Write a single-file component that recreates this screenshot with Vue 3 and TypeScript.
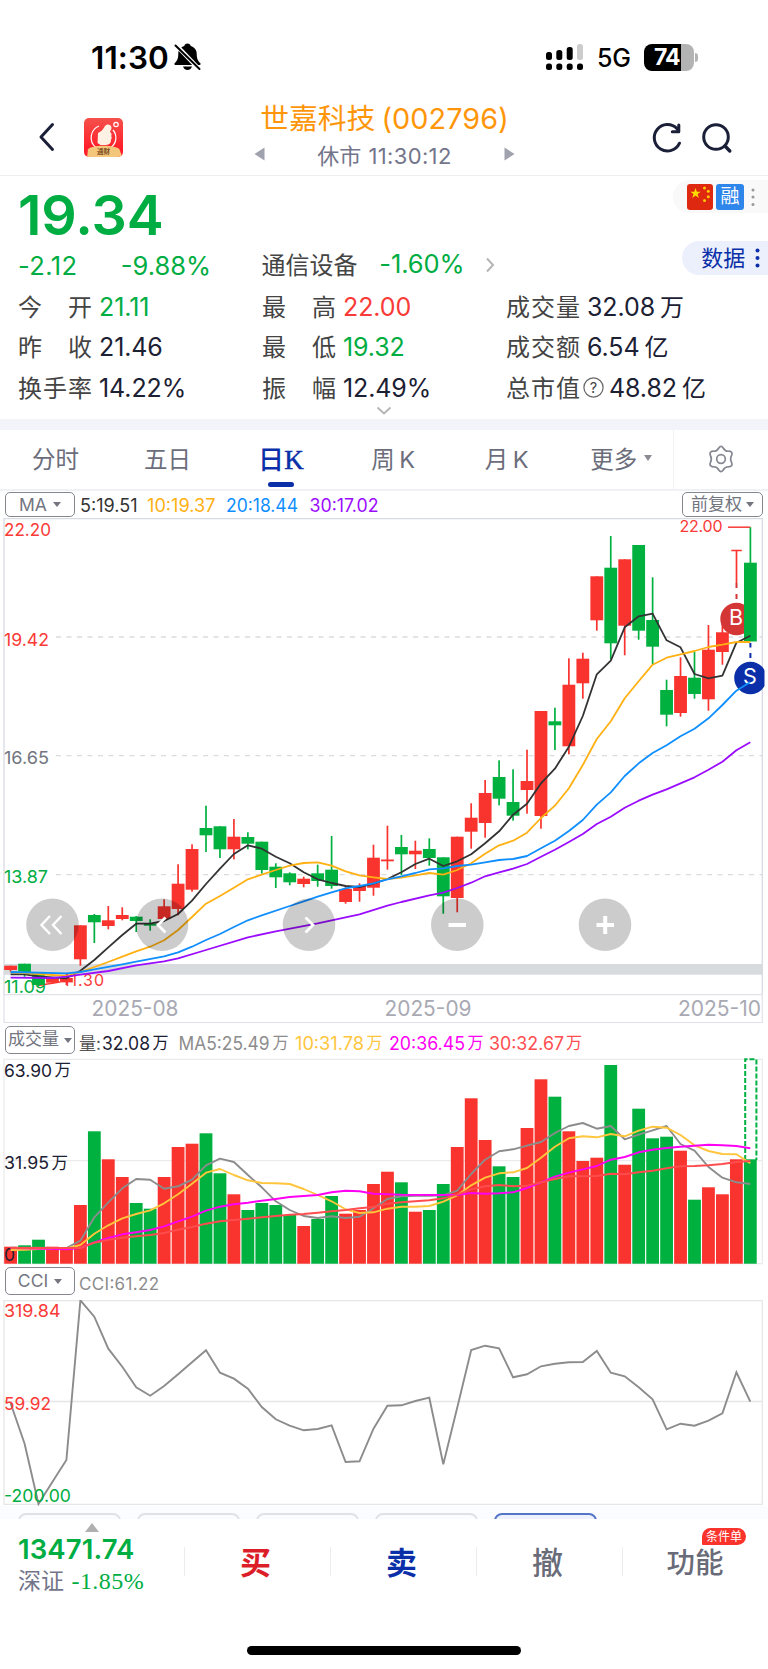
<script setup lang="ts">
type Candle = [color: 'r' | 'g', top: number, bottom: number, high: number, low: number]
type Point = [index: number, y: number]

const STEP = 13.957
const cx = (i: number): number => 10.6 + i * STEP

const candles: Candle[] = [
  ['r', 965.7, 970, 965.7, 972], ['g', 963.7, 972, 963.7, 976.7], ['g', 972.7, 985, 972.7, 986],
  ['r', 978.3, 982.7, 977, 984], ['r', 978, 982.4, 976, 985], ['r', 925.3, 959.3, 925.3, 965.7],
  ['g', 915, 922.3, 914, 943], ['r', 920.3, 926, 906, 929.3], ['r', 915, 919, 907.3, 920.3],
  ['g', 916.7, 921, 916, 932], ['g', 923.5, 925.7, 919.3, 930.7], ['r', 906.3, 919, 899.3, 921.7],
  ['r', 883.7, 909, 864.3, 915.3], ['r', 849, 889.7, 844.3, 891.7], ['g', 828, 835.3, 805.7, 852],
  ['g', 826.3, 849.3, 826.3, 858], ['r', 836.7, 849.3, 819, 859.3], ['g', 837, 843.7, 832.3, 849.3],
  ['g', 841.7, 870, 841.7, 873.7], ['g', 866.7, 877.3, 863.3, 888], ['g', 873.3, 882.3, 872.3, 885.3],
  ['r', 878.7, 884, 876.7, 887.3], ['g', 873.3, 881, 864.7, 886.7], ['g', 869.7, 886, 836, 888.7],
  ['r', 889, 902, 887.3, 903.7], ['r', 886, 891, 883.3, 901.7], ['r', 857.7, 887.7, 844.7, 895.7],
  ['r', 859.5, 861.3, 825.7, 869.7], ['g', 847, 854.3, 835, 875], ['r', 850.7, 854.3, 840.7, 869],
  ['g', 849, 858, 838.3, 865.7], ['g', 857.3, 896.3, 857.3, 913.7], ['r', 836.7, 898, 836.7, 912.3],
  ['r', 817.7, 831.7, 803.3, 848.7], ['r', 793, 823, 780, 837.7], ['g', 777, 798.7, 760.3, 805.3],
  ['g', 802, 815.7, 769.3, 820.7], ['r', 781, 790, 749.7, 813.7], ['r', 711, 816, 711, 828.7],
  ['g', 721.3, 725.3, 707.7, 750], ['r', 684.7, 746.3, 658.3, 754.3], ['r', 658.7, 683.3, 652.7, 698.7],
  ['r', 576.3, 620.3, 576.3, 630.7], ['g', 567.7, 643.3, 536, 659.3], ['r', 559.3, 625.7, 559.3, 655.3],
  ['g', 545, 630.7, 545, 639.7], ['g', 620, 646.7, 577.3, 664], ['g', 690, 714.7, 679.7, 726.3],
  ['r', 676, 713, 657.3, 716.7], ['g', 677.7, 694, 651.7, 698.7], ['r', 649.7, 699.3, 625, 710.7],
  ['r', 632.3, 652, 621.7, 664.7],
]

const path = (pts: Point[]): string => pts.map(([i, y]) => `${cx(i).toFixed(1)},${y}`).join(' ')
const series = (ys: number[]): Point[] => ys.map((y, i): Point => [i, y])
const volY = (v: number): number => Math.round((1020 + v / 3) * 10) / 10
const cciY = (v: number): number => Math.round((1260 + v / 3) * 10) / 10

const priceLines: { color: string; points: string }[] = [
  {
    color: '#333',
    points: path(series([974.3, 974.3, 976.3, 977.3, 978.3, 970.7, 960, 947.3, 935, 923.7, 923.7, 921, 914, 900.7, 884, 868.7, 854, 845.3, 848.7, 856.7, 863.3, 872.3, 879.3, 883, 886, 887, 883.7, 879, 872.3, 864, 858.7, 866, 861.3, 854.3, 843.3, 831.3, 814.7, 803.7, 783.3, 768.7, 746.7, 716, 674.3, 660.7, 627.3, 616.3, 613.7, 640.3, 647.3, 674, 678.3, 675.7, 642.7, 635.7])),
  },
  {
    color: '#ffb012',
    points: path([[0, 972], [4, 976], [5, 972], [6, 967], [7, 962], [8, 956.7], [9, 951.3], [10, 946.7], [11, 940.3], [12, 930], [13, 917], [14, 903.7], [15, 896], [16, 887.7], [17, 879.3], [18, 874.7], [19, 870], [20, 865.7], [21, 863], [22, 862.3], [23, 865.7], [24, 871.3], [25, 875.3], [26, 877.3], [27, 879], [28, 877.7], [29, 875.3], [30, 873], [31, 874.7], [32, 870], [33, 863.3], [34, 853.7], [35, 845.3], [36, 840.7], [37, 832.7], [38, 818], [39, 805.7], [40, 788.3], [41, 765], [42, 739], [43, 721.3], [44, 698.3], [45, 681.3], [46, 664.7], [47, 657.7], [48, 654.3], [49, 651], [50, 647], [51, 644.7], [52, 642], [53, 642]]),
  },
  {
    color: '#0f8eff',
    points: path([[0, 972], [4, 973.3], [5, 972], [6, 969.3], [8, 964.3], [9, 961.7], [11, 956.3], [12, 952.3], [13, 946.7], [14, 940], [15, 934], [16, 927], [17, 920.3], [18, 915.3], [20, 906], [21, 901.3], [22, 896.7], [23, 892.3], [24, 888.3], [25, 886], [26, 883.3], [27, 879.3], [28, 876.3], [29, 873], [30, 869.3], [31, 868.3], [32, 866], [33, 864.7], [34, 862.3], [35, 860], [36, 859], [37, 856], [38, 848.3], [39, 840.7], [40, 831], [41, 820], [42, 804.7], [43, 792.3], [44, 776], [45, 763.3], [46, 753], [47, 745.3], [48, 736.3], [49, 728.7], [50, 718.3], [51, 705], [52, 690.7], [53, 682]]),
  },
  {
    color: '#9b0cff',
    points: path([[0, 977.7], [3, 978], [4, 976.7], [5, 974.7], [7, 971], [9, 965.3], [11, 961.3], [12, 958.3], [14, 950], [17, 937.3], [19, 931.3], [22, 923.3], [25, 914.3], [27, 905.7], [28, 902], [30, 895.3], [31, 892.7], [32, 888], [33, 882.7], [34, 876.3], [35, 872.3], [36, 868.7], [37, 864], [38, 856.7], [39, 849.7], [40, 842], [41, 834], [42, 824], [43, 816.7], [44, 807.7], [45, 800.7], [46, 794.7], [47, 789.3], [48, 783.3], [49, 777.3], [50, 769.7], [51, 761.7], [52, 750.3], [53, 742.3]]),
  },
]

const volumeColors = 'rggrrrgrrggrrrggrggggrggrrrrgrggrrrggrrgrrrgrgggrgrrrg'
const volumes = [680, 676, 659, 680, 683, 555, 334, 418, 471, 549, 566, 471, 381, 371, 340, 460, 523, 570, 549, 555, 585, 618, 597, 528, 581, 570, 492, 455, 487, 575, 570, 492, 381, 235, 360, 439, 471, 324, 178, 230, 334, 423, 413, 135, 434, 266, 355, 350, 392, 539, 502, 523, 418, 418]
  .map((v, i) => ({ up: volumeColors[i] === 'r', y: volY(v) }))

const vol = (pts: Point[]): string => path(pts.map(([i, v]): Point => [i, volY(v)]))
const volumeLines: { color: string; points: string }[] = [
  { color: '#8c8c8c', points: vol(series([683, 683, 683, 684, 684, 662, 592, 547, 505, 477, 479, 506, 499, 479, 436, 416, 426, 465, 502, 544, 570, 588, 594, 589, 594, 590, 565, 537, 529, 527, 527, 526, 512, 462, 419, 394, 388, 377, 366, 339, 318, 309, 326, 318, 358, 344, 331, 318, 372, 392, 441, 473, 487, 492])) },
  { color: '#ffc53d', points: vol(series([690, 689, 687, 686, 685, 675, 641, 616, 595, 582, 571, 550, 523, 491, 458, 447, 465, 481, 489, 490, 492, 507, 525, 544, 568, 579, 577, 566, 560, 560, 558, 545, 526, 496, 473, 460, 457, 444, 413, 380, 355, 349, 352, 342, 349, 332, 320, 323, 345, 376, 393, 402, 403, 430])) },
  { color: '#ff00f5', points: vol([[0, 684], [4, 688], [5, 684], [6, 667], [7, 654], [8, 643], [9, 637], [10, 630], [11, 619], [12, 604], [13, 590], [14, 572], [15, 560], [16, 553], [17, 548], [18, 542], [19, 537], [20, 531], [21, 528], [22, 525], [23, 517], [24, 512], [25, 514], [26, 521], [27, 523], [28, 524], [32, 525], [33, 519], [34, 521], [35, 520], [36, 517], [37, 504], [38, 487], [39, 470], [40, 458], [41, 448], [42, 438], [43, 419], [44, 411], [45, 397], [46, 389], [47, 384], [48, 380], [49, 377], [50, 374], [51, 376], [52, 378], [53, 385]]) },
  { color: '#ff4d4f', points: vol([[0, 684], [5, 684], [6, 668], [7, 659], [8, 653], [9, 649], [10, 645], [11, 639], [12, 629], [13, 621], [14, 611], [15, 604], [16, 600], [17, 596], [18, 592], [19, 588], [20, 584], [21, 582], [22, 578], [23, 574], [24, 570], [25, 565], [26, 561], [27, 551], [28, 547], [30, 541], [31, 535], [32, 524], [33, 508], [34, 499], [35, 495], [36, 499], [37, 497], [38, 487], [39, 477], [40, 469], [42, 468], [43, 461], [44, 463], [45, 457], [46, 452], [47, 445], [48, 439], [49, 438], [50, 436], [51, 432], [52, 426], [53, 423]]) },
]

const cciLine = path(series([430, 551, 732, 665, 600, 121, 170, 266, 320, 382, 407, 378, 343, 307, 271, 338, 356, 386, 441, 478, 497, 511, 507, 496, 606, 604, 506, 437, 436, 423, 413, 613, 443, 270, 257, 265, 352, 343, 319, 311, 307, 306, 273, 338, 349, 382, 418, 508, 491, 497, 482, 460, 337, 425].map(cciY)))

interface Stat { label: string; value: string; unit?: string; tone?: string; help?: boolean }
const stats: Stat[] = [
  { label: '今开', value: '21.11', tone: 'down' },
  { label: '最高', value: '22.00', tone: 'up' },
  { label: '成交量', value: '32.08', unit: '万' },
  { label: '昨收', value: '21.46' },
  { label: '最低', value: '19.32', tone: 'down' },
  { label: '成交额', value: '6.54', unit: '亿' },
  { label: '换手率', value: '14.22%' },
  { label: '振幅', value: '12.49%' },
  { label: '总市值', value: '48.82', unit: '亿', help: true },
]

interface Label { t: string; x: number; y: number; w: number; s: number; c: string }
const maLegend: Label[] = [
  { t: '5:19.51', x: 80, y: 20.2, w: 57.5, s: 18, c: '#333' },
  { t: '10:19.37', x: 147, y: 20.2, w: 68.5, s: 18, c: '#ffb012' },
  { t: '20:18.44', x: 226, y: 20.2, w: 72, s: 18, c: '#0f8eff' },
  { t: '30:17.02', x: 309.5, y: 20.2, w: 69, s: 18, c: '#9b0cff' },
]
const volLegend: Label[] = [
  { t: '量:', x: 79, y: 22.5, w: 22, s: 17.5, c: '#555' },
  { t: '32.08', x: 102, y: 22.5, w: 48, s: 18, c: '#1c2033' },
  { t: '万', x: 152.5, y: 22, w: 16, s: 16.5, c: '#1c2033' },
  { t: 'MA5:25.49', x: 178.5, y: 22.5, w: 91, s: 18, c: '#8c8c8c' },
  { t: '万', x: 272.5, y: 22, w: 16, s: 16.5, c: '#8c8c8c' },
  { t: '10:31.78', x: 295, y: 22.5, w: 69, s: 18, c: '#ffc53d' },
  { t: '万', x: 366.5, y: 22, w: 16, s: 16.5, c: '#ffc53d' },
  { t: '20:36.45', x: 389, y: 22.5, w: 76, s: 18, c: '#ff00f5' },
  { t: '万', x: 467.5, y: 22, w: 16, s: 16.5, c: '#ff00f5' },
  { t: '30:32.67', x: 489, y: 22.5, w: 75, s: 18, c: '#ff4d4f' },
  { t: '万', x: 566, y: 22, w: 16, s: 16.5, c: '#ff4d4f' },
]
const priceLabels: Label[] = [
  { t: '22.20', x: 4, y: 535.5, w: 47, s: 17.5, c: '#fa3a36' },
  { t: '19.42', x: 4, y: 645.5, w: 45, s: 17.5, c: '#fa3a36' },
  { t: '16.65', x: 4, y: 764, w: 45, s: 17.5, c: '#73767f' },
  { t: '13.87', x: 4, y: 882.5, w: 44, s: 17.5, c: '#00ad42' },
  { t: '11.09', x: 4, y: 992.5, w: 42, s: 17.5, c: '#00ad42' },
]
const dateLabels: Label[] = [
  { t: '2025-08', x: 91.5, y: 1015.5, w: 87, s: 21, c: '#a8a9b3' },
  { t: '2025-09', x: 384.5, y: 1015.5, w: 87, s: 21, c: '#a8a9b3' },
  { t: '2025-10', x: 678, y: 1015.5, w: 83, s: 21, c: '#a8a9b3' },
]
const volLabels: Label[] = [
  { t: '63.90', x: 4, y: 1076.5, w: 48, s: 17.5, c: '#1c2033' },
  { t: '万', x: 54.5, y: 1076, w: 16.5, s: 17, c: '#1c2033' },
  { t: '31.95', x: 4, y: 1169, w: 45, s: 17.5, c: '#1c2033' },
  { t: '万', x: 51.5, y: 1168.5, w: 16.5, s: 17, c: '#1c2033' },
  { t: '0', x: 4, y: 1261, w: 11, s: 17.5, c: '#1c2033' },
]
const cciLabels: Label[] = [
  { t: '319.84', x: 4, y: 1317, w: 56.5, s: 17.5, c: '#fa3a36' },
  { t: '59.92', x: 4, y: 1409.5, w: 47, s: 17.5, c: '#fa3a36' },
  { t: '-200.00', x: 4, y: 1502, w: 67, s: 17.5, c: '#00ad42' },
]
const controls = [52.5, 162, 309, 457.3, 605]
</script>

<template>
  <main class="screen">
    <section class="status">
      <div class="clock">11:30</div>
      <svg class="bell" width="27" height="28" viewBox="0 0 27 28">
        <path d="M13.500.5c-1.800 0-3 1-3.200 2.400C6.500 4 4.300 7 4.300 10.500c0 5-1 7.200-3.500 9.500-.8.800-.5 2 .6 2h24.200c1.100 0 1.400-1.200.6-2-2.500-2.300-3.500-4.500-3.500-9.500 0-3.500-2.200-6.500-6-7.600C16.500 1.500 15.300.5 13.500.5zM9 23.500c.5 2 2.300 3.400 4.500 3.400s4-1.400 4.500-3.400z" fill="#000" />
        <path d="M2 2l23.500 24.500" stroke="#fff" stroke-width="4.400" />
        <path d="M1.500 2.500l24 23.500" stroke="#000" stroke-width="2" stroke-linecap="round" />
      </svg>
      <svg class="signal" width="40" height="28" viewBox="0 0 40 28">
        <g fill="#000">
          <rect x="1" y="9" width="6" height="8" rx="2.500" /><rect x="11.300" y="7" width="6" height="10" rx="2.500" />
          <rect x="21.700" y="4" width="6" height="13" rx="2.500" />
          <rect x="1" y="20.500" width="6" height="6.500" rx="2.500" /><rect x="11.300" y="20.500" width="6" height="6.500" rx="2.500" />
          <rect x="21.700" y="20.500" width="6" height="6.500" rx="2.500" /><rect x="32" y="20.500" width="6" height="6.500" rx="2.500" />
        </g>
        <rect x="32" y="1" width="6" height="16" rx="2.500" fill="#ccc" />
      </svg>
      <div class="net">5G</div>
      <div class="battery"><span>74</span></div>
      <i class="nub"></i>
    </section>

    <header class="head">
      <div class="head-left">
        <svg width="17" height="30" viewBox="0 0 17 30"><path d="M14.500 2.500L3 15l11.500 12.500" fill="none" stroke="#1b2038" stroke-width="3" stroke-linecap="round" stroke-linejoin="round" /></svg>
        <svg class="logo" width="39" height="39" viewBox="0 0 39 39">
          <defs>
            <linearGradient id="lg" x1="0" y1="0" x2="0" y2="1"><stop offset="0" stop-color="#f5514a" /><stop offset=".75" stop-color="#ff1f2b" /></linearGradient>
            <clipPath id="lc"><rect width="39" height="39" rx="5" /></clipPath>
          </defs>
          <g clip-path="url(#lc)">
            <rect width="39" height="39" fill="url(#lg)" />
            <path d="M15 8a12.500 12.500 0 0 0-3 21.500M29 12a12 12 0 0 1-2 17.500" fill="none" stroke="#fff" stroke-width="1.200" />
            <path d="M14 15l2.500-1.500c2-1 3-3 4.500-5.500 1.500-2.500 6-2 6.500 1.500.3 2-1.500 3-1.500 4.500 1.500 1 2 2.500 1.200 4 .8 1.500.5 3-.3 3.800.3 3.200-1.500 5.200-4.900 5.200h-5.500L13.500 25z" fill="#fff1e4" />
            <path d="M4 31.500c3-5 28-5 31.500 0l3 8H3z" fill="#f3c67c" />
            <circle cx="32" cy="6.500" r="2.200" fill="none" stroke="#fff" stroke-width="1.200" />
            <text x="13" y="36.300" textLength="13" font-size="6.500" font-weight="700" fill="#7c4a20">通财</text>
          </g>
        </svg>
      </div>
      <div class="head-mid">
        <div class="title">世嘉科技<span>(002796)</span></div>
        <div class="sub">
          <svg width="11" height="14" viewBox="0 0 11 14"><path d="M10.500.5v13L.5 7z" fill="#a0a2ae" /></svg>
          <div>休市 <span>11:30:12</span></div>
          <svg width="11" height="14" viewBox="0 0 11 14"><path d="M.5.5v13l10-6.500z" fill="#a0a2ae" /></svg>
        </div>
      </div>
      <div class="head-right">
        <svg width="32" height="32" viewBox="0 0 32 32"><path d="M28.500 21.200A13.200 13.200 0 1 1 26 6.600M27.800 3v6.700h-6.500" fill="none" stroke="#1b2038" stroke-width="3" stroke-linecap="round" stroke-linejoin="round" /></svg>
        <svg width="32" height="32" viewBox="0 0 32 32"><circle cx="15" cy="15" r="12.300" fill="none" stroke="#1b2038" stroke-width="3" /><path d="M24 24l4.800 5" stroke="#1b2038" stroke-width="3.400" stroke-linecap="round" /></svg>
      </div>
    </header>

    <section class="quote">
      <div class="row-price">
        <div class="price">19.34</div>
        <div class="marks">
          <svg width="26" height="26" viewBox="0 0 26 26"><rect width="26" height="26" rx="3" fill="#de2910" /><path d="M8.500 4l1.300 3.700h3.900l-3.100 2.400 1.200 3.800-3.300-2.300-3.200 2.300 1.200-3.800-3.100-2.400h3.900z" fill="#ffde00" /><g fill="#ffca00"><circle cx="17.500" cy="4" r="1.500" /><circle cx="21.300" cy="7.300" r="1.500" /><circle cx="21.300" cy="12.700" r="1.500" /><circle cx="17.500" cy="16.500" r="1.500" /></g></svg>
          <b>融</b>
          <svg width="4" height="20" viewBox="0 0 4 20"><g fill="#999"><circle cx="2" cy="3" r="1.500" /><circle cx="2" cy="10" r="1.500" /><circle cx="2" cy="17.500" r="1.500" /></g></svg>
        </div>
      </div>
      <div class="row-change">
        <span class="chg">-2.12</span>
        <span class="pct">-9.88%</span>
        <span class="sector">通信设备</span>
        <span class="spct">-1.60%</span>
        <svg width="10" height="16" viewBox="0 0 10 16"><path d="M2 1.500L8 8l-6 6.500" fill="none" stroke="#b5b5b5" stroke-width="2" /></svg>
        <div class="data"><span>数据</span><svg width="5" height="20" viewBox="0 0 5 20"><g fill="#0a2fa8"><circle cx="2.500" cy="2.500" r="2" /><circle cx="2.500" cy="10" r="2" /><circle cx="2.500" cy="17.500" r="2" /></g></svg></div>
      </div>
      <div class="stats">
        <div v-for="s in stats" :key="s.label" class="stat">
          <span class="lab"><i v-for="ch in s.label" :key="ch">{{ ch }}</i></span>
          <svg v-if="s.help" class="help" width="21" height="21" viewBox="0 0 21 21"><circle cx="10.500" cy="10.500" r="9.600" fill="none" stroke="#666" stroke-width="1.200" /><text x="10.500" y="15.700" text-anchor="middle" font-size="14.500" fill="#444">?</text></svg>
          <span class="val" :class="s.tone">{{ s.value }}</span><span v-if="s.unit" class="unit">{{ s.unit }}</span>
        </div>
      </div>
      <svg class="more" width="16" height="9" viewBox="0 0 16 9"><path d="M1.500 1.500L8 7.500l6.500-6" fill="none" stroke="#b5b5b5" stroke-width="1.800" /></svg>
    </section>

    <nav class="tabs">
      <span class="t1">分时</span><span>五日</span>
      <span class="active"><b>日<em>K</em></b><i></i></span>
      <span class="k">周 K</span><span class="k">月 K</span>
      <span class="t6">更多<svg width="10" height="8" viewBox="0 0 10 8"><path d="M1 1h8L5 7z" fill="#8a8c95" /></svg></span>
      <span class="gear">
        <svg width="28" height="28" viewBox="0 0 28 28" fill="none" stroke="#858791" stroke-width="1.700" stroke-linejoin="round">
          <path d="M11.800 3Q14 -.2 16.200 3Q18 6.600 22 6.200Q26 6.600 24.700 10.200Q22.600 14 24.700 17.800Q26 21.400 22 21.800Q18 21.400 16.200 25Q14 28.200 11.800 25Q10 21.400 6 21.800Q2 21.400 3.300 17.800Q5.400 14 3.300 10.200Q2 6.600 6 6.200Q10 6.600 11.800 3z" />
          <circle cx="14" cy="14" r="4.300" />
        </svg>
      </span>
    </nav>

    <section class="legend ma">
      <div class="pick">MA<i></i></div>
      <svg class="leg" width="598" height="26" viewBox="79 0 598 26"><text v-for="l in maLegend" :key="l.t" :x="l.x" :y="l.y" :textLength="l.w" :font-size="l.s" :fill="l.c" lengthAdjust="spacingAndGlyphs">{{ l.t }}</text></svg>
      <div class="pick adj"><span>前复权</span><i></i></div>
    </section>

    <svg class="chart" width="768" height="506" viewBox="0 518 768 506">
      <path d="M4 994.700V518.500H762.300V994.700" fill="none" stroke="#d8dbe3" stroke-width="1.300" />
      <path d="M4 994.700H762.300V1022.500H4z" fill="none" stroke="#e1e2e8" stroke-width="1.200" />
      <path d="M56 637H762M56 755.700H762M56 874.600H762" stroke="#dcdcdf" stroke-width="1.300" stroke-dasharray="5 5.500" />
      <rect x="4" y="964" width="758.500" height="10.700" fill="#d7dbde" />
      <text v-for="l in priceLabels" :key="l.t" :x="l.x" :y="l.y" :textLength="l.w" :font-size="l.s" :fill="l.c" lengthAdjust="spacingAndGlyphs">{{ l.t }}</text>
      <text v-for="l in dateLabels" :key="l.t" :x="l.x" :y="l.y" :textLength="l.w" :font-size="l.s" :fill="l.c" lengthAdjust="spacingAndGlyphs">{{ l.t }}</text>
      <text x="679.500" y="532" textLength="43" font-size="16" fill="#fa3a36">22.00</text>
      <path d="M728 527.200H750.500" stroke="#fa3a36" stroke-width="1.500" />
      <text x="63" y="985.500" textLength="41" font-size="16" fill="#fa3a36">11.30</text>
      <path d="M38 985.500L60 982" stroke="#fa3a36" stroke-width="1.500" />
      <g v-for="(c, i) in candles" :key="i" :fill="c[0] === 'r' ? '#f9332d' : '#00b140'">
        <rect :x="cx(i) - 0.85" :y="c[3]" width="1.700" :height="c[4] - c[3]" />
        <rect :x="cx(i) - 6.400" :y="c[1]" width="12.800" :height="c[2] - c[1]" />
      </g>
      <path d="M731.300 550.500H741.800M736.500 550.500V583" stroke="#f9332d" stroke-width="1.700" />
      <path d="M736.500 583V588M736.500 594V599" stroke="#d43535" stroke-width="2" />
      <circle cx="736.500" cy="619" r="16.200" fill="#d43535" />
      <text x="736" y="624.500" text-anchor="middle" font-size="21.500" fill="#fff">B</text>
      <rect x="744" y="562.700" width="12.800" height="78.800" fill="#00b140" />
      <path d="M750.400 527.300V563" stroke="#00b140" stroke-width="1.700" />
      <path d="M750.400 643V647.500M750.400 653V658" stroke="#0a2fa8" stroke-width="2" />
      <clipPath id="edge"><rect x="0" y="500" width="764.500" height="530" /></clipPath>
      <circle cx="750.400" cy="678" r="16.200" fill="#0a2fa8" clip-path="url(#edge)" />
      <text x="750" y="684" text-anchor="middle" font-size="21.500" fill="#fff">S</text>
      <polyline v-for="l in priceLines" :key="l.color" :points="l.points" :stroke="l.color" fill="none" stroke-width="1.800" stroke-linejoin="round" />
      <circle v-for="x in controls" :key="x" :cx="x" cy="924.800" r="26.300" fill="#000" fill-opacity=".2" />
      <g fill="none" stroke="#fff" stroke-width="2.400">
        <path d="M50 916L41.500 925L50 934M61.500 916L53 925L61.500 934" />
        <path d="M165.500 917.500L158 925L165.500 932.500M305.500 917.500L313 925L305.500 932.500" stroke-width="2.800" />
        <path d="M448.500 925H466M596.500 925H614M605.200 916V934" stroke-width="4" />
      </g>
    </svg>

    <section class="legend volume">
      <div class="pick"><span>成交量</span><i></i></div>
      <svg class="leg" width="600" height="32" viewBox="79 -3 600 32"><text v-for="l in volLegend" :key="l.x" :x="l.x" :y="l.y" :textLength="l.w" :font-size="l.s" :fill="l.c" lengthAdjust="spacingAndGlyphs">{{ l.t }}</text></svg>
    </section>
    <svg class="chart" width="768" height="207" viewBox="0 1058 768 207">
      <path d="M4 1263.700V1059.300H762.300V1263.700zM4 1160.700H762" fill="none" stroke="#ebebed" stroke-width="1.300" />
      <rect v-for="(v, i) in volumes" :key="i" :x="cx(i) - 6.400" :y="v.y" width="12.800" :height="1263.700 - v.y" :fill="v.up ? '#f9332d' : '#00b140'" />
      <path d="M745.200 1160V1059.300H756.400V1160" fill="none" stroke="#00b140" stroke-width="2" stroke-dasharray="5 2" />
      <text v-for="l in volLabels" :key="l.y" :x="l.x" :y="l.y" :textLength="l.w" :font-size="l.s" :fill="l.c" lengthAdjust="spacingAndGlyphs">{{ l.t }}</text>
      <polyline v-for="l in volumeLines" :key="l.color" :points="l.points" :stroke="l.color" fill="none" stroke-width="1.900" stroke-linejoin="round" />
    </svg>

    <section class="legend cci">
      <div class="pick">CCI<i></i></div>
      <svg class="leg" width="600" height="35" viewBox="79 0 600 35"><text x="79" y="24.500" textLength="80" font-size="17" fill="#8c8c8c">CCI:61.22</text></svg>
    </section>
    <svg class="chart" width="768" height="206" viewBox="0 1300 768 206">
      <path d="M4 1504.300V1300.600H762.300V1504.300zM4 1401.500H762" fill="none" stroke="#e6e6e8" stroke-width="1.300" />
      <polyline :points="cciLine" fill="none" stroke="#8c8c8c" stroke-width="1.900" stroke-linejoin="miter" />
      <text v-for="l in cciLabels" :key="l.t" :x="l.x" :y="l.y" :textLength="l.w" :font-size="l.s" :fill="l.c" lengthAdjust="spacingAndGlyphs">{{ l.t }}</text>
    </svg>

    <div class="chips"><i v-for="n in 5" :key="n" :class="{ on: n === 5 }"></i></div>

    <footer class="foot">
      <div class="index">
        <svg width="14" height="9" viewBox="0 0 14 9"><path d="M7 0l7 9H0z" fill="#b0b0b0" /></svg>
        <strong>13471.74</strong>
        <div>深证 <em>-1.85%</em></div>
      </div>
      <div class="act buy">买</div>
      <div class="act sell">卖</div>
      <div class="act">撤</div>
      <div class="act fn">功能<small>条件单</small></div>
    </footer>
    <div class="home"></div>
  </main>
</template>

<style>
body { margin: 0; background: #fff; }
</style>

<style scoped>
.screen { width: 768px; height: 1669px; overflow: hidden; background: #fff; color: #1c2033; font-family: Inter, "Noto Sans CJK SC", sans-serif; display: flex; flex-direction: column; }
.screen > * { flex-shrink: 0; box-sizing: border-box; }
svg { display: block; flex-shrink: 0; }
i, em { font-style: normal; }

.status { height: 101px; padding: 13px 0 0 91px; display: flex; align-items: center; color: #000; }
.clock { width: 83px; font-size: 31.500px; font-weight: 600; letter-spacing: .1px; white-space: nowrap; }
.signal { margin-left: 344px; }
.net { width: 48px; margin-left: 12px; font-size: 25px; font-weight: 500; letter-spacing: -.3px; padding-top: 2px; }
.battery { width: 50px; height: 27px; margin-left: -1px; border-radius: 8px; background: linear-gradient(90deg, #000 74%, #b3b3b3 74%); display: flex; align-items: center; }
.battery span { margin-left: 10px; color: #fff; font-size: 23px; font-weight: 700; letter-spacing: -1px; }
.nub { width: 3px; height: 9px; margin-left: 1px; border-radius: 0 4px 4px 0; background: #b3b3b3; }

.head { height: 75px; border-bottom: 1.500px solid #efeff2; display: flex; }
.head-left { width: 254px; padding-left: 38px; display: flex; align-items: center; gap: 29px; padding-bottom: 2px; box-sizing: border-box; }
.head-mid { width: 261px; }
.title { height: 36px; line-height: 36px; text-align: center; font-size: 28.800px; color: #ff960a; white-space: nowrap; }
.title span { margin-left: 6px; letter-spacing: .1px; font-size: 28.800px; }
.sub { height: 33px; display: flex; align-items: center; justify-content: space-between; color: #73758a; font-size: 22px; }
.sub span { font-size: 22px; margin-left: 1px; letter-spacing: .35px; }
.head-right { margin-left: 136px; display: flex; align-items: center; gap: 18px; padding-bottom: 1px; }

.quote { height: 254px; border-bottom: 11px solid #f3f4f9; }
.row-price { height: 69px; display: flex; justify-content: space-between; }
.price { padding-left: 18px; color: #00ad42; font-size: 55.500px; font-weight: 600; line-height: 77px; letter-spacing: -.1px; }
.marks { width: 95px; height: 33px; margin-top: 4px; box-sizing: border-box; padding-left: 14px; border-radius: 17px 0 0 17px; background: #f9f9f9; display: flex; align-items: center; gap: 3px; }
.marks b { width: 28px; height: 26px; margin-right: 4px; border-radius: 3px; background: #2f86ea; color: #fff; font-size: 19px; font-weight: 400; line-height: 25px; text-align: center; }
.row-change { height: 40px; display: flex; align-items: center; color: #00ad42; font-size: 25.500px; white-space: nowrap; }
.chg { width: 103px; margin-left: 18px; letter-spacing: .4px; }
.pct { width: 141px; letter-spacing: 0; }
.sector { width: 118px; font-size: 24px; color: #444; padding-bottom: 4px; }
.spct { width: 106px; letter-spacing: -.1px; padding-bottom: 3px; }
.row-change > svg { margin-bottom: 1px; }
.data { width: 86px; height: 34px; margin-left: 187px; margin-top: -15px; padding-left: 19px; box-sizing: border-box; border-radius: 17px 0 0 17px; background: #eceffc; color: #0a2fa8; font-size: 22px; display: flex; align-items: center; gap: 10px; }
.data span { padding-bottom: 3px; }
.stats { height: 121px; padding-left: 18px; margin-top: 2px; display: grid; grid-template-columns: 244px 244px 1fr; grid-template-rows: repeat(3, 40.300px); }
.stat { display: flex; align-items: center; font-size: 25px; white-space: nowrap; }
.lab { width: 74px; font-size: 24px; color: #444; display: flex; justify-content: space-between; padding-bottom: 3px; }
.val { margin-left: 7px; letter-spacing: -.1px; }
.help { margin: 0 -2px 0 3px; }
.unit { margin-left: 5px; font-size: 24px; padding-bottom: 3px; }
.up { color: #fa3a36; }
.down { color: #00ad42; }
.more { margin: -2px auto 0; }

.tabs { height: 61px; border-bottom: 2px solid #f0f1f4; display: flex; color: #6b6d7b; font-size: 23.500px; }
.tabs > span { width: 113.500px; display: flex; align-items: center; justify-content: center; box-sizing: border-box; padding-bottom: 3px; }
.tabs > .t1 { width: 111px; }
.tabs > .k { padding-right: 2px; word-spacing: -2px; }
.tabs > .active { flex-direction: column; color: #0a2fa8; padding: 8px 0 0; }
.active b { font-size: 26px; line-height: 38px; font-weight: 500; }
.active em { font-family: "Liberation Serif", serif; font-size: 27px; font-weight: 400; -webkit-text-stroke: .5px #0a2fa8; }
.active i { width: 26px; height: 5px; margin-top: 3px; border-radius: 3px; background: #0a2fa8; }
.tabs > .t6 { width: 109px; gap: 6px; padding-left: 6px; }
.tabs > .gear { width: 95px; border-left: 1px solid #f1f2f5; padding-bottom: 1px; }

.legend { display: flex; padding-left: 5px; }
.legend.ma { height: 27px; padding-top: 1px; }
.leg { margin-left: 4px; }
.pick { width: 70px; height: 25px; box-sizing: border-box; border: 1.500px solid #85878f; border-radius: 5px; color: #73757f; font-size: 17.500px; line-height: 22px; display: flex; align-items: center; justify-content: center; gap: 6px; white-space: nowrap; }
.pick i { border: 4px solid transparent; border-top: 5px solid #73757f; border-bottom: 0; }
.pick span { margin-top: -2px; }
.pick.adj { width: 81px; margin-left: 5px; font-size: 17px; gap: 4px; }
.volume { height: 34px; padding-top: 2px; }
.volume .pick { height: 28px; font-size: 17px; gap: 5px; }
.cci { height: 35px; padding-top: 2px; }
.cci .pick { height: 28px; }
.volume .leg, .cci .leg { margin-top: -2px; }

.chips { height: 13px; padding: 7px 0 0 18px; overflow: hidden; display: flex; gap: 16px; background: #fbfcff; }
.chips i { width: 103px; height: 30px; flex-shrink: 0; box-sizing: border-box; border: 2px solid #e0e1e4; border-radius: 8px; }
.chips .on { border-color: #5475c8; background: #edf2fd; }

.foot { height: 107px; display: flex; }
.index { width: 184px; padding-left: 18px; box-sizing: border-box; }
.index svg { margin: 4px 0 0 67px; }
.index strong { display: block; height: 33px; line-height: 34px; font-size: 27.500px; font-weight: 600; letter-spacing: .1px; color: #00ad42; }
.index div { height: 34px; line-height: 32px; font-size: 23px; color: #73758a; white-space: nowrap; }
.index em { font-family: "Liberation Serif", serif; font-size: 24px; letter-spacing: .45px; margin-left: 1px; color: #00ad42; }
.act { position: relative; width: 146px; height: 86px; box-sizing: border-box; padding: 0 3px 4px 0; display: flex; align-items: center; justify-content: center; font-size: 31px; font-weight: 500; color: #696b78; background: linear-gradient(#ececf0, #ececf0) left 28px / 1px 29px no-repeat; }
.buy { color: #dc1e28; font-weight: 700; }
.sell { color: #0a2fa8; font-weight: 700; }
.fn { font-size: 28.500px; padding-right: 0; }
.fn small { position: absolute; left: 80px; top: 9px; width: 44px; height: 17px; border-radius: 9px 9px 9px 1px; background: #fa332d; color: #fff; font-size: 12px; font-weight: 400; line-height: 17px; text-align: center; }
.home { width: 274px; height: 9px; margin: 20px 0 0 247px; border-radius: 5px; background: #000; }
</style>
